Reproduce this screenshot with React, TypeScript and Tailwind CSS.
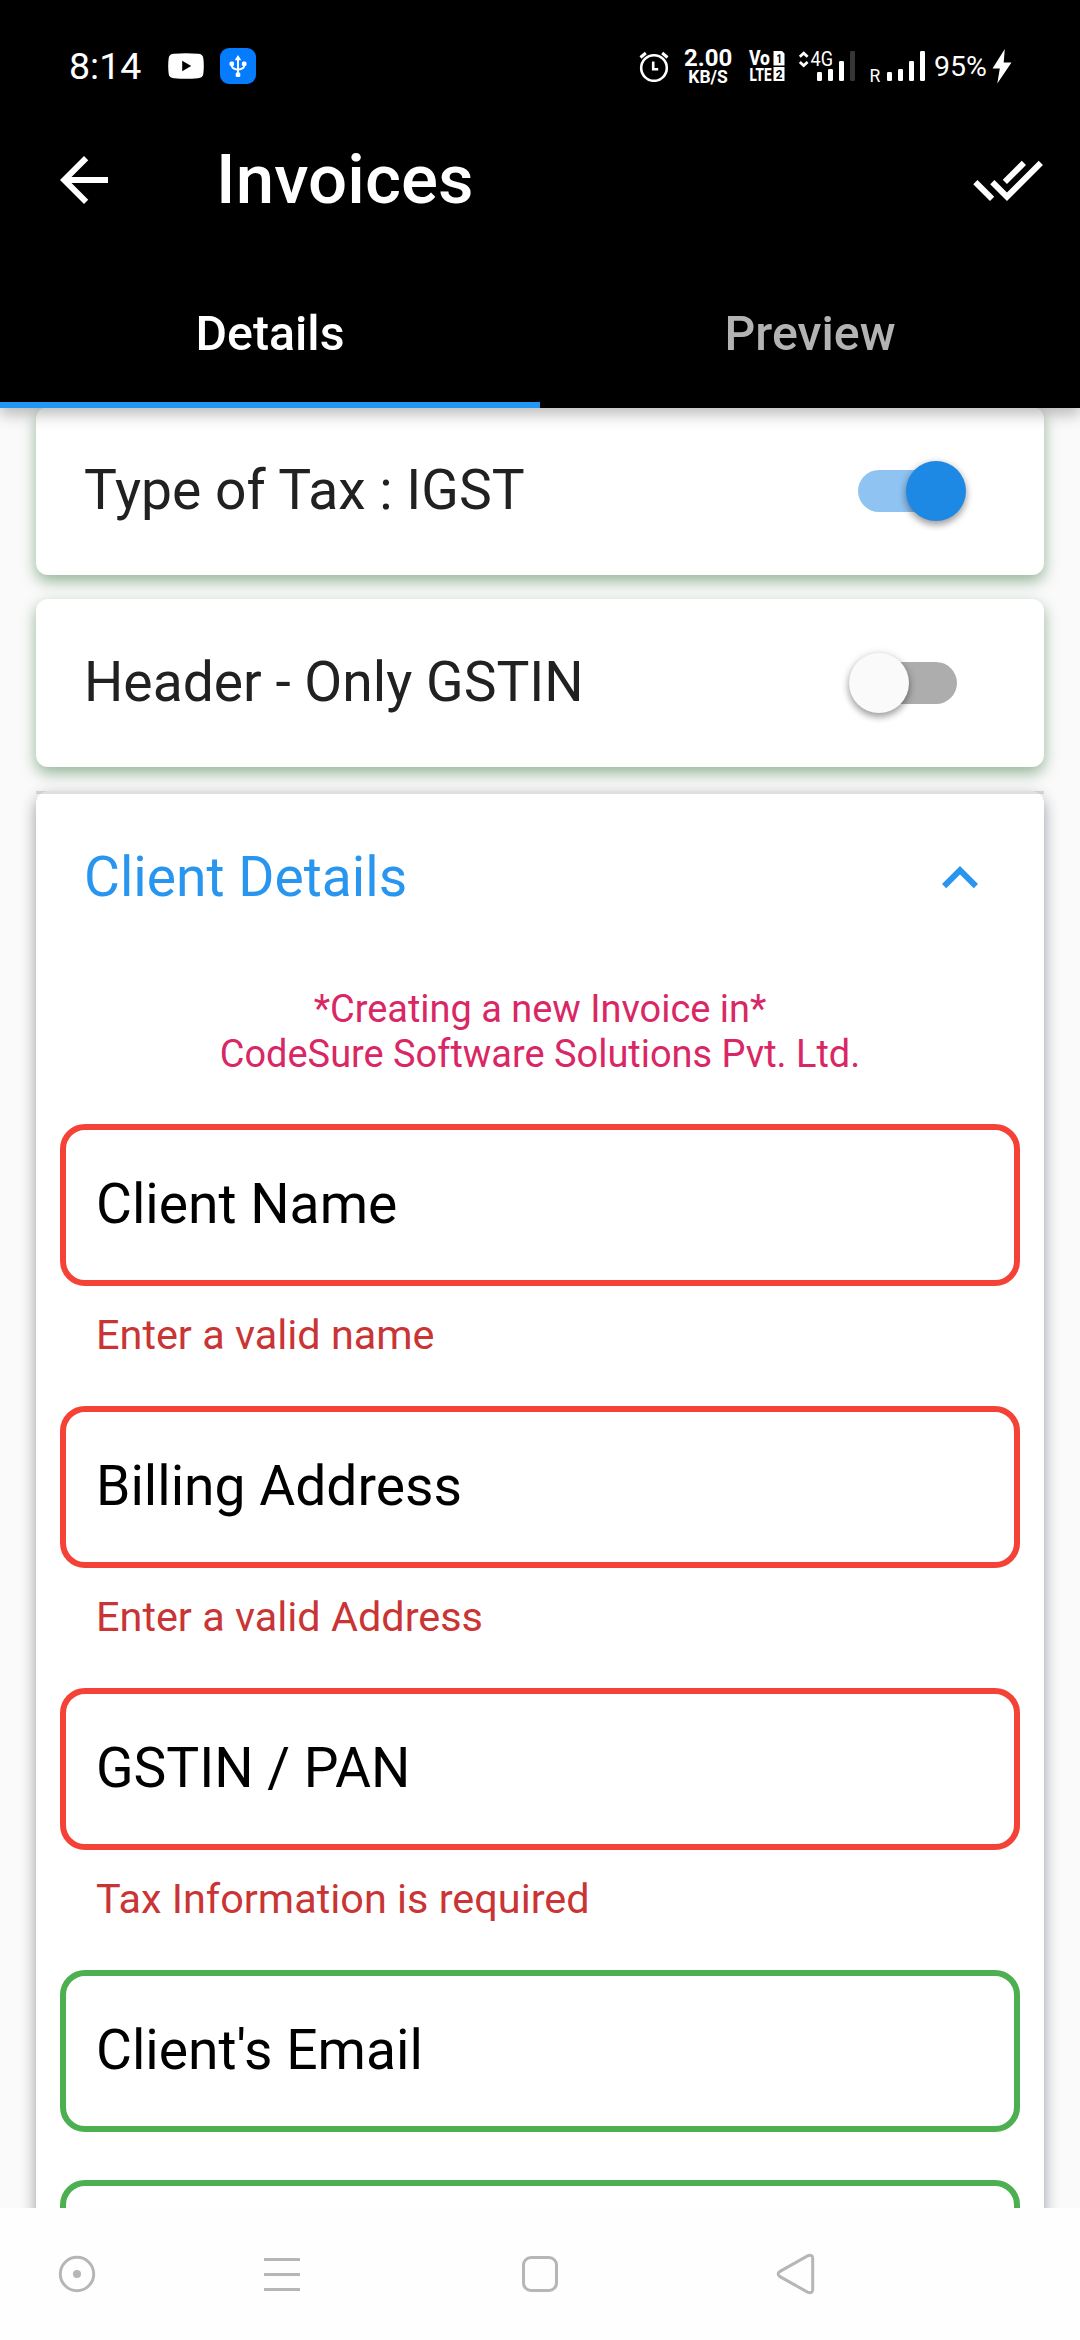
import React from "react";

function AlarmIcon() {
  return (
    <svg width="30" height="32" viewBox="0 0 30 32" fill="none" stroke="#fff">
      <circle cx="15" cy="18" r="12.8" strokeWidth="2.6" />
      <path d="M1.5 7.5L6.8 3M28.5 7.5L23.2 3" strokeWidth="3" />
      <path d="M14.2 11.5v7.8h5" strokeWidth="2.6" />
    </svg>
  );
}

function VolteIcon() {
  return (
    <svg className="overflow-visible" width="36" height="32" viewBox="0 0 36 32" fill="#fff" fontFamily="Roboto, sans-serif" fontWeight="800">
      <text x="0" y="15.300" fontSize="19.500" textLength="21" lengthAdjust="spacingAndGlyphs">Vo</text>
      <text x="0.600" y="31" fontSize="19" textLength="22" lengthAdjust="spacingAndGlyphs">LTE</text>
      <path d="M24.500 1h8.500l2.500 2.500V15.500h-11zM24.500 17h11V31h-11z" />
      <text x="27.400" y="13" fontSize="13" fill="#000" textLength="5.500" lengthAdjust="spacingAndGlyphs">1</text>
      <text x="26.700" y="28.800" fontSize="13" fill="#000" textLength="6.800" lengthAdjust="spacingAndGlyphs">2</text>
    </svg>
  );
}

function MobileSignal() {
  return (
    <svg className="overflow-visible" width="57" height="32" viewBox="0 0 57 32" fill="#fff">
      <path d="M1.800 6.800L5.700 3.200L9.600 6.800M1.800 12L5.700 15.600L9.600 12" fill="none" stroke="#fff" strokeWidth="2.700" />
      <text x="12.500" y="16" fontSize="20" fontFamily="Roboto, sans-serif" textLength="22.500" lengthAdjust="spacingAndGlyphs">4G</text>
      <rect x="19" y="22" width="5" height="9" rx="1.200" />
      <rect x="30" y="19" width="5" height="12" rx="1.200" />
      <rect x="41" y="11" width="5" height="20" rx="1.200" />
      <rect x="52" y="1" width="5" height="30" rx="1.200" fill="#363636" />
    </svg>
  );
}

function RoamingSignal() {
  return (
    <svg className="overflow-visible" width="55" height="32" viewBox="0 0 55 32" fill="#fff">
      <text x="-0.500" y="32" fontSize="17.500" fontFamily="Roboto, sans-serif">R</text>
      <rect x="17" y="22" width="5" height="9" rx="1.200" />
      <rect x="28" y="19" width="5" height="12" rx="1.200" />
      <rect x="39" y="11" width="5" height="20" rx="1.200" />
      <rect x="50" y="1" width="5" height="30" rx="1.200" />
    </svg>
  );
}

function StatusBar() {
  return (
    <div className="flex h-24 items-start text-white">
      <div className="ml-[69px] mt-[44px] w-[99px] text-[37.500px] leading-[44px]">8:14</div>
      <svg className="mt-[53px]" width="36" height="26" viewBox="0 0 36 26">
        <path d="M6 .8Q18-.4 30 .8Q34.800 1 35.300 5Q36.300 13 35.300 21Q34.800 25 30 25.200Q18 26.400 6 25.200Q1.200 25 .7 21Q-.3 13 .7 5Q1.200 1 6 .8z" fill="#fff" />
        <path d="M14.200 7.800v10.400l9-5.200z" fill="#000" />
      </svg>
      <div className="ml-4 mt-12 flex size-9 items-center justify-center rounded-[9px] bg-[#057bfe]">
        <svg width="18" height="24" viewBox="0 0 18 24" fill="#fff">
          <path d="M9 4v16M2.800 8v3.500c0 2.500 2 3.700 6.200 4.200M15.200 8v3.500c0 2.500-2 3.700-6.200 4.200" fill="none" stroke="#fff" strokeWidth="1.900" />
          <path d="M9 1l3.300 5.300H5.700z" />
          <rect x="0.500" y="7.500" width="4.600" height="4.600" rx="1.500" />
          <rect x="12.900" y="7.500" width="4.600" height="4.600" rx="1.500" />
          <rect x="6.700" y="18.500" width="4.600" height="4.500" rx="1.200" />
        </svg>
      </div>
      <div className="ml-auto mr-[68px] flex items-start">
        <div className="mt-[50px]"><AlarmIcon /></div>
        <div className="ml-[15px] mt-[46px] flex w-[48px] flex-col items-center font-bold">
          <span className="text-[24px] leading-[24px]">2.00</span>
          <span className="text-[17.500px] leading-[14px]">KB/S</span>
        </div>
        <div className="ml-[17px] mt-[50px]"><VolteIcon /></div>
        <div className="ml-[13px] mt-[50px]"><MobileSignal /></div>
        <div className="ml-[15px] mt-[50px]"><RoamingSignal /></div>
        <div className="ml-[9px] mt-[50px] text-[28.500px] leading-[34px]">95%</div>
        <svg className="ml-[5px] mt-[49px]" width="20" height="35" viewBox="0 0 20 35" fill="#fff">
          <path d="M12.800 0L.5 19.500h7.300L5.300 34.500L19.500 13.500h-7.800z" />
        </svg>
      </div>
    </div>
  );
}

function AppBar() {
  return (
    <header className="relative z-10 h-[408px] bg-black shadow-[0_6px_15px_rgba(0,0,0,0.28)]">
      <StatusBar />
      <div className="flex h-[168px] items-center px-9">
        <svg className="ml-3" width="72" height="72" viewBox="0 0 24 24" fill="#fff">
          <path d="M20 11H7.830l5.590-5.590L12 4l-8 8 8 8 1.410-1.410L7.830 13H20v-2z" />
        </svg>
        <h1 className="ml-24 text-[69px] font-medium leading-[80px] tracking-[0.100px] text-white">Invoices</h1>
        <svg className="ml-auto" width="72" height="72" viewBox="0 0 24 24" fill="#fff">
          <path d="M18 7l-1.410-1.410-6.340 6.340 1.410 1.410L18 7zm4.240-1.410L11.660 16.170 7.480 12l-1.410 1.410L11.660 19l12-12-1.420-1.410zM.410 13.410L6 19l1.410-1.410L1.830 12 .410 13.410z" />
        </svg>
      </div>
      <nav className="grid h-36 grid-cols-2 text-center text-[48.300px] font-medium">
        <div className="h-36 border-b-[6px] border-[#2196f3] leading-[140px] text-white">Details</div>
        <div className="h-36 leading-[140px] text-[#b3b3b3]">Preview</div>
      </nav>
    </header>
  );
}

function Switch({ on }: { on: boolean }) {
  return (
    <div className={"mr-[39px] flex h-[42px] w-[99px] items-center rounded-full " + (on ? "justify-end bg-[#8fc3f2]" : "justify-start bg-[#adadad]")}>
      <div
        className={
          "size-[60px] shrink-0 rounded-full shadow-[0_4px_7px_rgba(0,0,0,0.32),0_1px_10px_rgba(0,0,0,0.14)] " +
          (on ? "-mr-[9px] bg-[#1e88e5]" : "-ml-[9px] bg-[#fafafa]")
        }
      />
    </div>
  );
}

function SwitchCard({ label, on }: { label: string; on: boolean }) {
  return (
    <div className="flex h-[168px] items-center justify-between rounded-xl bg-white px-12 text-[55.200px] leading-[64px] text-[#212121] shadow-[0_6px_15px_rgba(22,94,31,0.45)]">
      <span className="pb-0.5">{label}</span>
      <Switch on={on} />
    </div>
  );
}

function Field({ label, error }: { label: string; error?: string }) {
  return (
    <div className={error ? "h-[282px]" : "h-[210px]"}>
      <div className={"flex h-[162px] items-center rounded-[25px] border-[6px] px-[30px] pb-0.5 text-[55.200px] leading-[64px] text-black " + (error ? "border-[#f44336]" : "border-[#4caf50]")}>
        {label}
      </div>
      {error && <p className="mt-6 px-9 text-[41.400px] leading-[50px] text-[#c93434]">{error}</p>}
    </div>
  );
}

function ClientPanel() {
  return (
    <section className="rounded-xl bg-white shadow-[0_6px_15px_rgba(38,48,62,0.48)]">
      <div className="h-[3px] bg-black/12" />
      <div className="flex h-[168px] items-center justify-between px-12 text-[55.200px] leading-[64px] text-[#2896ee]">
        <h2 className="pb-0.5">Client Details</h2>
        <svg width="72" height="72" viewBox="0 0 24 24" fill="currentColor">
          <path d="M12 8l-6 6 1.410 1.410L12 10.830l4.590 4.580L18 14z" />
        </svg>
      </div>
      <p className="mt-[25px] text-center text-[37.950px] leading-[45px] text-[#d92765]">
        *Creating a new Invoice in*
        <br />
        CodeSure Software Solutions Pvt. Ltd.
      </p>
      <div className="mt-[47px] px-6">
        <Field label="Client Name" error="Enter a valid name" />
        <Field label="Billing Address" error="Enter a valid Address" />
        <Field label="GSTIN / PAN" error="Tax Information is required" />
        <Field label="Client's Email" />
        <Field label="" />
      </div>
    </section>
  );
}

function NavigationBar() {
  return (
    <footer className="flex h-[132px] items-center bg-[#fefefe] pl-[57px]">
      <svg width="40" height="40" viewBox="0 0 40 40" fill="none" stroke="#b6b6b6" strokeWidth="3">
        <circle cx="20" cy="20" r="16.700" />
        <circle cx="20" cy="20" r="4" fill="#b6b6b6" stroke="none" />
      </svg>
      <svg className="ml-[167px]" width="36" height="40" viewBox="0 0 36 40" fill="#b6b6b6">
        <rect y="4" width="36" height="3" rx="0.500" />
        <rect y="19" width="36" height="3" rx="0.500" />
        <rect y="34" width="36" height="3" rx="0.500" />
      </svg>
      <div className="ml-[222px] size-9 rounded-[9px] border-[3px] border-[#b6b6b6]" />
      <svg className="ml-[218px]" width="40" height="42" viewBox="0 0 40 42" fill="none" stroke="#b6b6b6" strokeWidth="3">
        <path d="M3.600 18.600L31.500 2.900Q36.700 1 36.700 5.500V36.500Q36.700 41 31.500 39.100L3.600 23.400Q.7 21 3.600 18.600z" />
      </svg>
    </footer>
  );
}

export default function App() {
  return (
    <div className="flex h-[2340px] w-[1080px] flex-col overflow-hidden bg-[#fafafa] font-[Roboto,sans-serif]">
      <AppBar />
      <main className="h-[1800px] overflow-hidden">
        <div className="-mt-px flex flex-col gap-6 px-9">
          <SwitchCard label="Type of Tax : IGST" on />
          <SwitchCard label="Header - Only GSTIN" on={false} />
          <ClientPanel />
        </div>
      </main>
      <NavigationBar />
    </div>
  );
}
